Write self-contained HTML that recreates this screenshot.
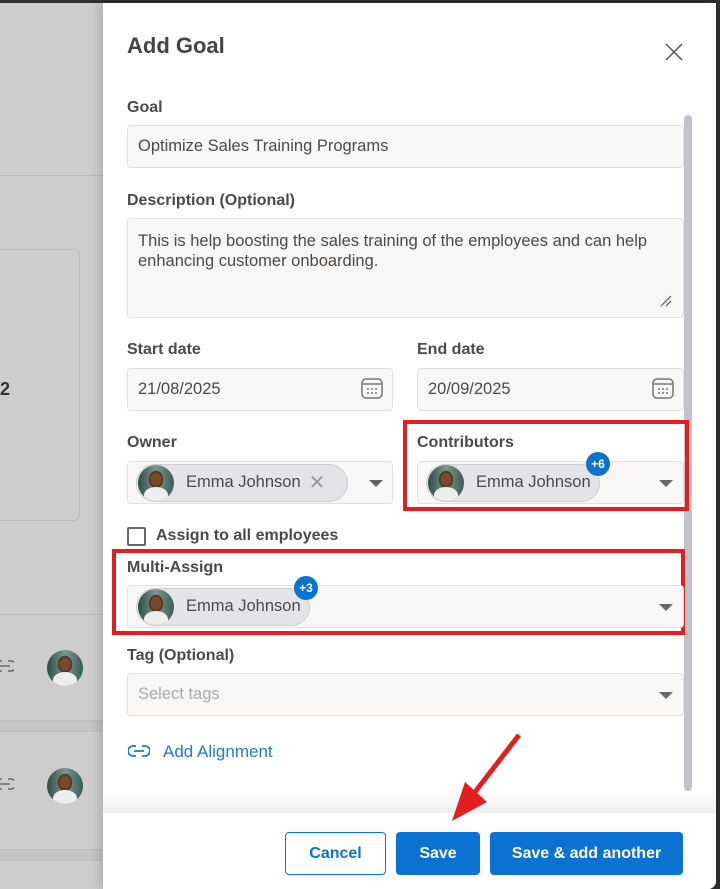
<!DOCTYPE html>
<html><head><style>
*{box-sizing:border-box;margin:0;padding:0}
body{width:720px;height:889px;overflow:hidden;position:relative;background:#2e2e2e;font-family:"Liberation Sans",sans-serif;color:#333}
.a{position:absolute}
.bg{left:0;top:3px;width:716px;height:886px;background:#cdcdcd;border-bottom-right-radius:8px;overflow:hidden}
.panel{left:103px;top:3px;width:613px;height:886px;background:#fff;box-shadow:-4px 0 10px rgba(0,0,0,.15);border-bottom-right-radius:8px}
.lbl{font-size:16px;font-weight:bold;color:#4a4a4a;left:127px}
.inp{background:#f8f7f6;border:1px solid #e2e2e2;border-radius:4px;font-size:16.5px;color:#4a4a4a;padding-left:10px;display:flex;align-items:center}
.chip{background:#e4e4e8;border:1px solid #cfcfd4;border-radius:20px;height:38px;display:flex;align-items:center;font-size:16.5px;color:#4a4a4a}
.av{width:36px;height:36px;border-radius:50%;background:radial-gradient(ellipse at 50% 40%,#7a4a30 0 20%,#5a3a28 21% 28%,transparent 29%),linear-gradient(90deg,#2f4a45,#7a9a90 50%,#3a5a55);margin-left:1px;margin-right:12px;position:relative;overflow:hidden}
.av::after{content:"";position:absolute;left:6px;top:22px;width:24px;height:16px;border-radius:50% 50% 0 0;background:#eee}
.caret{width:0;height:0;border-left:7px solid transparent;border-right:7px solid transparent;border-top:7px solid #666}
.badge{width:24px;height:24px;border-radius:50%;background:#0a72d0;color:#fff;font-size:12px;font-weight:bold;display:flex;align-items:center;justify-content:center}
.red{border:4px solid #e41e1e}
.btn{border-radius:4px;font-size:16px;font-weight:bold;display:flex;align-items:center;justify-content:center}
</style></head><body>
<div class="a bg">
 <div class="a" style="left:0;top:172px;width:103px;height:1px;background:#bdbdbd"></div>
 <div class="a" style="left:-10px;top:246px;width:90px;height:272px;border:1px solid #bdbdbd;border-radius:6px"></div>
 <div class="a" style="left:0;top:376px;font-size:18px;font-weight:bold;color:#333">2</div>
 <div class="a" style="left:0;top:611px;width:103px;height:1px;background:#bdbdbd"></div>
 <div class="a" style="left:0;top:717px;width:103px;height:12px;background:#c4c4c4;border-top:1px solid #bdbdbd;border-bottom:1px solid #bdbdbd"></div>
 <div class="a" style="left:0;top:846px;width:103px;height:12px;background:#c4c4c4;border-top:1px solid #bdbdbd;border-bottom:1px solid #bdbdbd"></div>
 <svg class="a" style="left:-6px;top:656px" width="20" height="14"><path d="M8 2H5a5 5 0 0 0 0 10h3M14 2h3a5 5 0 0 1 0 10h-3M6 7h10" stroke="#666" stroke-width="1.6" fill="none"/></svg>
 <svg class="a" style="left:-6px;top:774px" width="20" height="14"><path d="M8 2H5a5 5 0 0 0 0 10h3M14 2h3a5 5 0 0 1 0 10h-3M6 7h10" stroke="#666" stroke-width="1.6" fill="none"/></svg>
 <div class="av" style="position:absolute;left:46px;top:647px"></div>
 <div class="av" style="position:absolute;left:46px;top:765px"></div>
</div>
<div class="a panel"></div>
<div class="a" style="left:127px;top:33px;font-size:22px;font-weight:bold;color:#444">Add Goal</div>
<svg class="a" style="left:665px;top:43px" width="18" height="18"><path d="M1 1L17 17M17 1L1 17" stroke="#555" stroke-width="1.5"/></svg>
<div class="a" style="left:684px;top:115px;width:8px;height:676px;background:#c2c2cc;border-radius:4px"></div>

<div class="a lbl" style="top:99px">Goal</div>
<div class="a inp" style="left:127px;top:125px;width:557px;height:43px">Optimize Sales Training Programs</div>
<div class="a lbl" style="top:192px">Description (Optional)</div>
<div class="a inp" style="left:127px;top:218px;width:557px;height:100px;align-items:flex-start;padding-top:12px;line-height:20px">This is help boosting the sales training of the employees and can help enhancing customer onboarding.</div>
<svg class="a" style="left:660px;top:295px" width="12" height="12"><path d="M1 11L11 1M6 11L11 6" stroke="#555" stroke-width="1.2"/></svg>

<div class="a lbl" style="top:341px">Start date</div>
<div class="a lbl" style="top:341px;left:417px">End date</div>
<div class="a inp" style="left:127px;top:368px;width:266px;height:43px">21/08/2025</div>
<div class="a inp" style="left:417px;top:368px;width:267px;height:43px">20/09/2025</div>
<svg class="a" style="left:361px;top:377px" width="22" height="22"><rect x="1" y="2" width="20" height="19" rx="4" fill="none" stroke="#777" stroke-width="1.5"/><path d="M1 7H21" stroke="#777" stroke-width="1.5"/><g fill="#777"><circle cx="7" cy="12" r="1"/><circle cx="11" cy="12" r="1"/><circle cx="15" cy="12" r="1"/><circle cx="7" cy="16" r="1"/><circle cx="11" cy="16" r="1"/><circle cx="15" cy="16" r="1"/></g></svg>
<svg class="a" style="left:652px;top:377px" width="22" height="22"><rect x="1" y="2" width="20" height="19" rx="4" fill="none" stroke="#777" stroke-width="1.5"/><path d="M1 7H21" stroke="#777" stroke-width="1.5"/><g fill="#777"><circle cx="7" cy="12" r="1"/><circle cx="11" cy="12" r="1"/><circle cx="15" cy="12" r="1"/><circle cx="7" cy="16" r="1"/><circle cx="11" cy="16" r="1"/><circle cx="15" cy="16" r="1"/></g></svg>

<div class="a lbl" style="top:434px">Owner</div>
<div class="a inp" style="left:127px;top:461px;width:266px;height:43px;padding-left:8px"><div class="chip" style="width:212px"><div class="av"></div>Emma Johnson<span style="margin-left:8px;color:#999;font-size:20px">✕</span></div></div>
<div class="a caret" style="left:369px;top:480px"></div>

<div class="a red" style="left:403px;top:420px;width:286px;height:91px"></div>
<div class="a lbl" style="top:434px;left:417px">Contributors</div>
<div class="a inp" style="left:417px;top:461px;width:267px;height:43px;padding-left:8px"><div class="chip" style="width:174px"><div class="av"></div>Emma Johnson</div></div>
<div class="a badge" style="left:586px;top:452px">+6</div>
<div class="a caret" style="left:659px;top:480px"></div>

<div class="a" style="left:127px;top:527px;width:19px;height:19px;border:2px solid #666;border-radius:2px"></div>
<div class="a" style="left:156px;top:527px;font-size:16px;font-weight:bold;color:#4a4a4a">Assign to all employees</div>

<div class="a red" style="left:112px;top:549px;width:573px;height:86px"></div>
<div class="a lbl" style="top:559px">Multi-Assign</div>
<div class="a inp" style="left:127px;top:585px;width:557px;height:43px;padding-left:8px"><div class="chip" style="width:174px"><div class="av"></div>Emma Johnson</div></div>
<div class="a badge" style="left:294px;top:576px">+3</div>
<div class="a caret" style="left:659px;top:604px"></div>

<div class="a lbl" style="top:647px">Tag (Optional)</div>
<div class="a inp" style="left:127px;top:673px;width:557px;height:43px;color:#aaa">Select tags</div>
<div class="a caret" style="left:659px;top:692px"></div>

<svg class="a" style="left:128px;top:744px" width="22" height="14"><path d="M8 2H5a5 5 0 0 0 0 10h3M14 2h3a5 5 0 0 1 0 10h-3M6 7h10" stroke="#1e7ad6" stroke-width="1.8" fill="none"/></svg>
<div class="a" style="left:163px;top:742px;font-size:17px;color:#1e7ad6">Add Alignment</div>

<div class="a" style="left:103px;top:790px;width:613px;height:24px;background:linear-gradient(rgba(255,255,255,0),rgba(0,0,0,.07))"></div>
<div class="a" style="left:103px;top:813px;width:613px;height:76px;background:#fff;border-bottom-right-radius:8px"></div>
<div class="a btn" style="left:285px;top:832px;width:101px;height:43px;border:1.5px solid #0a72d0;color:#0a72d0">Cancel</div>
<div class="a btn" style="left:396px;top:832px;width:84px;height:43px;background:#0a72d0;color:#fff">Save</div>
<div class="a btn" style="left:490px;top:832px;width:193px;height:43px;background:#0a72d0;color:#fff">Save &amp; add another</div>

<svg class="a" style="left:445px;top:730px" width="80" height="95"><path d="M74 5L30 62" stroke="#e41e1e" stroke-width="5"/><path d="M7 91L20 52L42 72Z" fill="#e41e1e"/></svg>
</body></html>
